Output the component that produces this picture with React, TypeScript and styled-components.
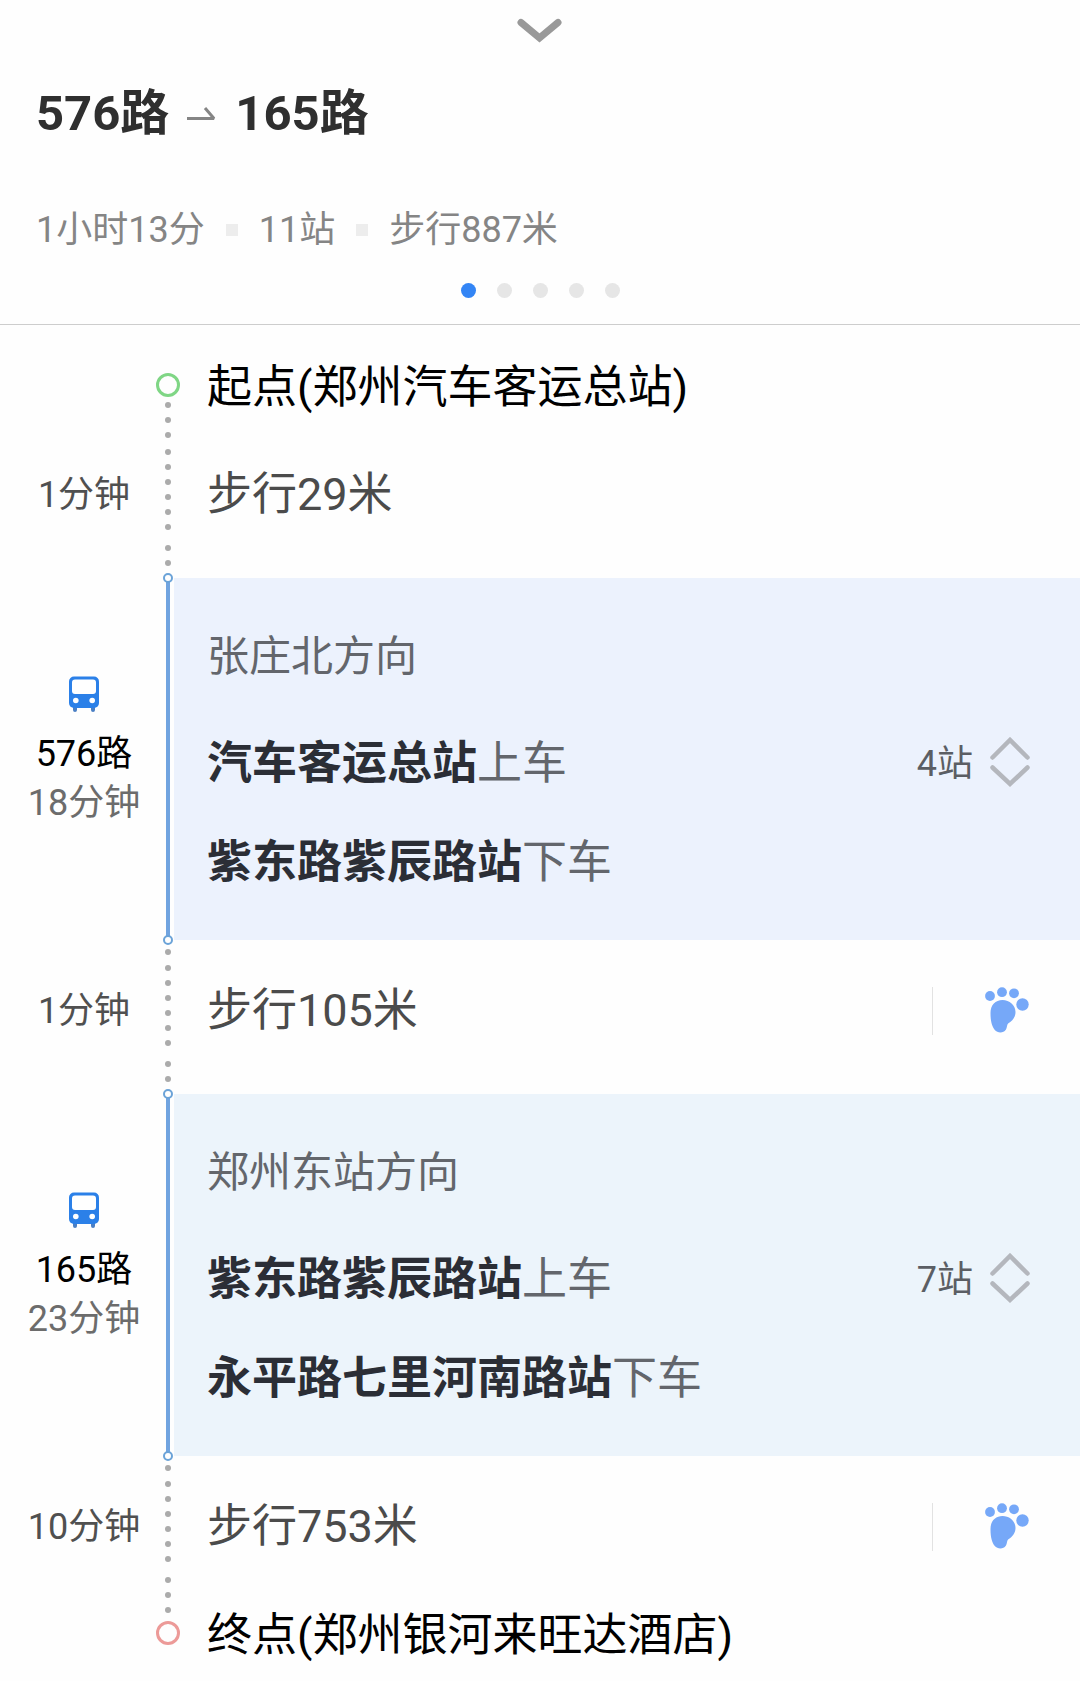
import React, { useState } from "react";
import styled, { createGlobalStyle } from "styled-components";

const GlobalStyle = createGlobalStyle`
  *, *::before, *::after { box-sizing: border-box; }
  body {
    margin: 0;
    background: #fefefe;
    color: #000;
    font-family: Roboto, "Noto Sans CJK SC", sans-serif;
  }
  h1, p, ol, ul { margin: 0; padding: 0; }
  ol, ul { list-style: none; }
  svg { display: block; }
  button {
    margin: 0;
    padding: 0;
    border: 0;
    background: none;
    color: inherit;
    font: inherit;
    cursor: pointer;
  }
`;

const Header = styled.header`
  display: flex;
  flex-direction: column;
  padding: 18px 36px 26px;
  border-bottom: 1px solid #cdcdcd;
`;

const CollapseButton = styled.button`
  align-self: center;
`;

const Title = styled.h1`
  display: flex;
  align-items: center;
  gap: 18px;
  margin-top: 40px;
  color: #2f2f2f;
  font-size: 49px;
  font-weight: 700;
  line-height: 60px;
`;

const Stats = styled.ul`
  display: flex;
  align-items: center;
  margin-top: 62px;
  color: #858585;
  font-size: 36px;
  line-height: 48px;
`;

const Stat = styled.li`
  display: flex;
  align-items: center;

  & + &::before {
    content: "";
    width: 12px;
    height: 12px;
    margin: 0 21px;
    background: #ededed;
  }
`;

const Pager = styled.nav`
  display: flex;
  justify-content: center;
  gap: 21px;
  margin-top: 29px;
`;

const PageDot = styled.button<{ $active: boolean }>`
  width: 15px;
  height: 15px;
  border-radius: 50%;
  background: ${(p) => (p.$active ? "#3385f5" : "#e6e6e6")};
`;

const Step = styled.li`
  display: flex;
`;

const Side = styled.div<{ $top?: number }>`
  display: flex;
  flex: none;
  flex-direction: column;
  align-items: center;
  width: 162px;
  padding: ${(p) => p.$top ?? 0}px 0 0 6px;
  font-size: 36px;
  line-height: 49px;
`;

const Duration = styled.p<{ $light?: boolean }>`
  color: ${(p) => (p.$light ? "#6c6c6c" : "#505050")};
`;

const LineName = styled.p`
  margin-top: 18px;
`;

const Rail = styled.div<{ $top?: number }>`
  display: flex;
  flex: none;
  flex-direction: column;
  align-items: center;
  width: 12px;
  padding-top: ${(p) => p.$top ?? 0}px;
`;

const Terminal = styled.span<{ $color: string; $before?: number }>`
  flex: none;
  width: 24px;
  height: 24px;
  margin-top: ${(p) => p.$before ?? 0}px;
  border: 3px solid ${(p) => p.$color};
  border-radius: 50%;
`;

const DotRun = styled.span<{ $before: number }>`
  display: flex;
  flex-direction: column;
  gap: 9px;
  margin-top: ${(p) => p.$before}px;
`;

const Dot = styled.span`
  width: 6px;
  height: 6px;
  border-radius: 50%;
  background: #ababab;
`;

const Stem = styled.span`
  flex: 1;
  width: 4px;
  background: #71a4e0;
`;

const Joint = styled.span`
  z-index: 1;
  flex: none;
  width: 10px;
  height: 10px;
  margin: -5px 0;
  border: 2px solid #6ba3d8;
  border-radius: 50%;
  background: #fff;
`;

const Content = styled.div<{ $top: number; $bottom: number }>`
  display: flex;
  flex: 1;
  align-items: center;
  justify-content: space-between;
  padding: ${(p) => p.$top}px 50px ${(p) => p.$bottom}px 33px;
  font-size: 45px;
  line-height: 60px;
`;

const WalkText = styled.p`
  color: #4b4b4b;
`;

const WalkAction = styled.div`
  display: flex;
  padding-left: 52px;
  border-left: 1px solid #e2e2e2;
`;

const Panel = styled.div<{ $tint: string }>`
  flex: 1;
  padding: 49px 50px 47px 33px;
  background: ${(p) => p.$tint};
`;

const Direction = styled.p`
  color: #63666c;
  font-size: 42px;
  line-height: 60px;
`;

const StopRow = styled.div<{ $gap: number }>`
  display: flex;
  align-items: center;
  justify-content: space-between;
  margin-top: ${(p) => p.$gap}px;
  color: #63666c;
  font-size: 45px;
  line-height: 60px;
`;

const StopName = styled.strong`
  color: #2b2e36;
  font-weight: 700;
`;

const StopsToggle = styled.button`
  display: flex;
  align-items: center;
  gap: 17px;
  color: #5b5e64;
  font-size: 36px;
  line-height: 49px;
`;

const ChevronDown = () => (
  <svg width="46" height="26" viewBox="0 0 46 26" fill="none" aria-hidden="true">
    <path d="M4 4.500L22.500 20L41 4.500" stroke="#999" strokeWidth="7" strokeLinecap="round" />
  </svg>
);

const TransferArrow = () => (
  <svg width="30" height="48" viewBox="0 0 30 48" fill="none" aria-hidden="true">
    <path d="M0 28.500H27L18 18" stroke="#858585" strokeWidth="3" strokeLinejoin="bevel" />
  </svg>
);

const BusIcon = () => (
  <svg width="32" height="36" viewBox="0 0 32 36" aria-hidden="true">
    <path d="M5 29h4v5a2 2 0 0 1-4 0zM23 29h4v5a2 2 0 0 1-4 0z" fill="#4a7fc4" />
    <rect x="1" y="0.500" width="30" height="31.500" rx="5" fill="#2b80e8" />
    <rect x="4" y="3.500" width="24" height="14.500" rx="3" fill="#fff" />
    <circle cx="7.800" cy="24.500" r="2.800" fill="#fff" />
    <circle cx="24.200" cy="24.500" r="2.800" fill="#fff" />
  </svg>
);

const ExpandIcon = () => (
  <svg width="40" height="54" viewBox="0 0 40 54" fill="none" aria-hidden="true">
    <path d="M2.500 20.500L20 3L37.500 20.500M2.500 30.500L20 47L37.500 30.500" stroke="#b4b7bd" strokeWidth="4.500" strokeLinecap="round" />
  </svg>
);

const FootIcon = () => (
  <svg width="45" height="48" viewBox="0 0 45 48" fill="#76a8f8" aria-hidden="true">
    <circle cx="5" cy="9" r="4.900" />
    <circle cx="17" cy="5.200" r="4.900" />
    <circle cx="29" cy="6.300" r="4.900" />
    <circle cx="37.500" cy="17.500" r="6.200" />
    <path d="M17.500 13C24.500 13 30.500 18 30.500 25C30.500 30.500 27 34 23.800 36C21.500 37.500 22.500 40 20.800 42.800C18.500 46.200 12.500 46.200 9.800 43C7.200 39.500 5.500 35 5.500 26C5.500 18 10.500 13 17.500 13Z" />
  </svg>
);

const Dots = ({ count, before }: { count: number; before: number }) => (
  <DotRun $before={before}>
    {Array.from({ length: count }, (_, i) => (
      <Dot key={i} />
    ))}
  </DotRun>
);

interface RideProps {
  line: string;
  duration: string;
  direction: string;
  from: string;
  to: string;
  stops: string;
  tint: string;
}

const Ride = ({ line, duration, direction, from, to, stops, tint }: RideProps) => (
  <Step>
    <Side $top={98}>
      <BusIcon />
      <LineName>{line}</LineName>
      <Duration $light>{duration}</Duration>
    </Side>
    <Rail>
      <Joint />
      <Stem />
      <Joint />
    </Rail>
    <Panel $tint={tint}>
      <Direction>{direction}</Direction>
      <StopRow $gap={47}>
        <p>
          <StopName>{from}</StopName>上车
        </p>
        <StopsToggle type="button">
          {stops}
          <ExpandIcon />
        </StopsToggle>
      </StopRow>
      <StopRow $gap={39}>
        <p>
          <StopName>{to}</StopName>下车
        </p>
      </StopRow>
    </Panel>
  </Step>
);

const Walk = ({ duration, distance, last }: { duration: string; distance: string; last?: boolean }) => (
  <Step>
    <Side $top={47}>
      <Duration>{duration}</Duration>
    </Side>
    <Rail $top={9}>
      <Dots count={1} before={0} />
      <Dots count={6} before={10} />
      {!last && <Dots count={2} before={15} />}
    </Rail>
    <Content $top={41} $bottom={last ? 15 : 53}>
      <WalkText>{distance}</WalkText>
      <WalkAction>
        <button type="button" aria-label="步行导航">
          <FootIcon />
        </button>
      </WalkAction>
    </Content>
  </Step>
);

export default function App() {
  const [page, setPage] = useState(0);

  return (
    <>
      <GlobalStyle />
      <Header>
        <CollapseButton type="button" aria-label="收起">
          <ChevronDown />
        </CollapseButton>
        <Title>
          <span>576路</span>
          <TransferArrow />
          <span>165路</span>
        </Title>
        <Stats>
          <Stat>1小时13分</Stat>
          <Stat>11站</Stat>
          <Stat>步行887米</Stat>
        </Stats>
        <Pager aria-label="方案">
          {[0, 1, 2, 3, 4].map((i) => (
            <PageDot
              key={i}
              type="button"
              aria-label={`方案${i + 1}`}
              $active={i === page}
              onClick={() => setPage(i)}
            />
          ))}
        </Pager>
      </Header>
      <main>
        <ol>
          <Step>
            <Side />
            <Rail $top={48}>
              <Terminal $color="#7fd685" />
              <Dots count={3} before={5} />
            </Rail>
            <Content $top={33} $bottom={26}>
              <p>起点(郑州汽车客运总站)</p>
            </Content>
          </Step>
          <Step>
            <Side $top={27}>
              <Duration>1分钟</Duration>
            </Side>
            <Rail $top={5}>
              <Dots count={6} before={0} />
              <Dots count={2} before={15} />
            </Rail>
            <Content $top={21} $bottom={53}>
              <WalkText>步行29米</WalkText>
            </Content>
          </Step>
          <Ride
            line="576路"
            duration="18分钟"
            direction="张庄北方向"
            from="汽车客运总站"
            to="紫东路紫辰路站"
            stops="4站"
            tint="#ecf2fd"
          />
          <Walk duration="1分钟" distance="步行105米" />
          <Ride
            line="165路"
            duration="23分钟"
            direction="郑州东站方向"
            from="紫东路紫辰路站"
            to="永平路七里河南路站"
            stops="7站"
            tint="#ecf4fb"
          />
          <Walk duration="10分钟" distance="步行753米" last />
          <Step>
            <Side />
            <Rail>
              <Dots count={3} before={5} />
              <Terminal $color="#ec9a98" $before={8} />
            </Rail>
            <Content $top={34} $bottom={16}>
              <p>终点(郑州银河来旺达酒店)</p>
            </Content>
          </Step>
        </ol>
      </main>
    </>
  );
}
